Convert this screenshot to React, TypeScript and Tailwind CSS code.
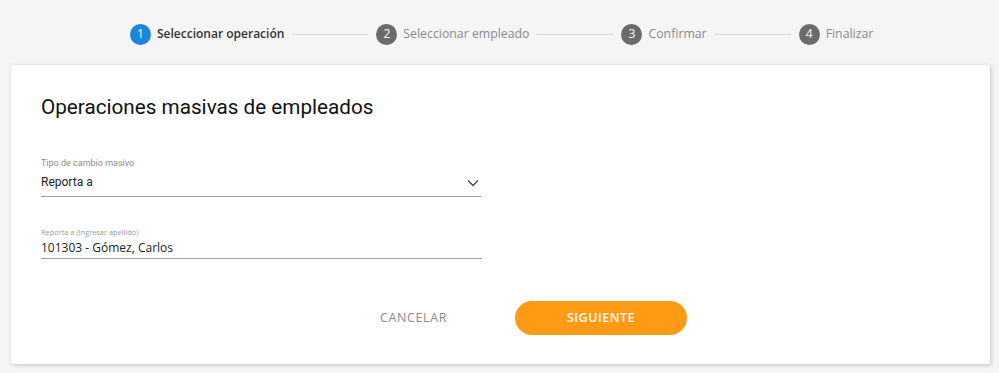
import React from "react";

const steps = [
  { n: 1, label: "Seleccionar operación" },
  { n: 2, label: "Seleccionar empleado" },
  { n: 3, label: "Confirmar" },
  { n: 4, label: "Finalizar" },
];

export default function App() {
  const active = 1;
  return (
    <div className="min-h-[373px] w-full bg-[#f5f5f5] pt-[23px] pb-[9px] px-[11px]" style={{ fontFamily: '"Open Sans", sans-serif' }}>
      {/* Stepper */}
      <div className="flex items-center pl-[119px] h-[22px]">
        {steps.map((s, i) => (
          <React.Fragment key={s.n}>
            {i > 0 && <div className="mx-[8px] h-px w-[76px] bg-[#d9d9d9]" />}
            <div className="flex items-center gap-[6px]">
              <span
                className={`flex h-[21px] w-[21px] items-center justify-center rounded-full text-[12px] text-white ${
                  s.n === active ? "bg-[#1a87dc]" : "bg-[#6b6b6b]"
                }`}
              >
                {s.n}
              </span>
              <span className={`${s.n === active ? "text-[12px] font-semibold text-[#333]" : "text-[12.3px] text-[#8a8a8a]"}`}>
                {s.label}
              </span>
            </div>
          </React.Fragment>
        ))}
      </div>

      {/* Card */}
      <div className="mt-[20px] h-[299px] w-[979px] rounded-[3px] bg-white px-[30px] pt-[27px] shadow-[1px_1px_4px_rgba(0,0,0,0.22)]">
        <h1 className="text-[20.7px] leading-[30px] text-[#111]" style={{ fontFamily: "Roboto, sans-serif" }}>
          Operaciones masivas de empleados
        </h1>

        <div className="mt-[34px] w-[440px]">
          <label className="block text-[9px] leading-[14px] text-[#8c8c8c]" style={{ fontFamily: "Roboto, sans-serif" }}>
            Tipo de cambio masivo
          </label>
          <div className="flex h-[27px] items-start justify-between border-b border-[#9e9e9e] pt-[3px]" style={{ fontFamily: "Roboto, sans-serif" }}>
            <span className="text-[12px] leading-[18px] text-[#222]">Reporta a</span>
            <svg width="12" height="8" viewBox="0 0 12 8" className="mr-[2px] mt-[6px]">
              <path d="M1 1.5 L6 6.5 L11 1.5" fill="none" stroke="#444" strokeWidth="1.3" />
            </svg>
          </div>
        </div>

        <div className="mt-[29px] w-[441px]">
          <label className="block text-[7.4px] leading-[12px] text-[#9a9a9a]">Reporta a (Ingresar apellido)</label>
          <div className="flex h-[21px] items-center border-b border-[#9e9e9e]">
            <span className="text-[12px] text-[#222]">101303 - Gómez, Carlos</span>
          </div>
        </div>

        <div className="mt-[42px] flex items-center">
          <button className="ml-[339px] w-[65px] text-center text-[12.5px] tracking-[0.6px] text-[#8a8a8a]">CANCELAR</button>
          <button className="ml-[70px] h-[34px] w-[172px] rounded-full bg-[#ff9a14] text-[12.5px] font-semibold tracking-[0.5px] text-white">
            SIGUIENTE
          </button>
        </div>
      </div>
    </div>
  );
}
